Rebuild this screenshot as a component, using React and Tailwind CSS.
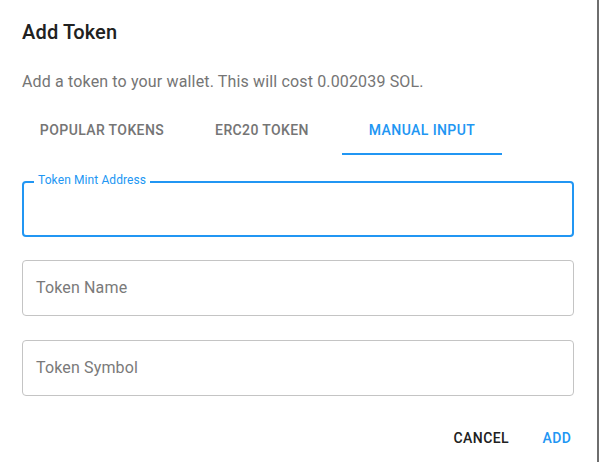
export default function App() {
  const tabs = ["Popular Tokens", "ERC20 Token", "Manual Input"];
  const medium = { fontFamily: "'Roboto Medium', Roboto, 'Liberation Sans', sans-serif" };
  return (
    <div className="flex w-[599px] h-[462px] bg-white" style={{ fontFamily: "Roboto, 'Liberation Sans', sans-serif" }}>
      <div className="w-[597px] h-[462px] bg-white flex flex-col">
        <div style={medium} className="pl-[22px] pt-4 pb-4 text-[20px] leading-[32px] font-medium tracking-[0.15px] text-[#212121]">
          Add Token
        </div>
        <div className="pl-[22px] pr-[23px] pt-[6px] flex flex-col">
          <p className="text-[16px] leading-[24px] text-[#757575] tracking-[0.15px] mb-[13px]">
            Add a token to your wallet. This will cost 0.002039 SOL.
          </p>
          <div className="flex h-[48px]">
            {tabs.map((t, i) => (
              <div
                key={t}
                style={medium}
                className={
                  "w-[160px] h-[48px] flex items-center justify-center uppercase text-[14px] font-medium tracking-[0.4px] " +
                  (i === 2 ? "text-[#2196f3] border-b-2 border-[#2196f3]" : "text-[#757575] border-b-2 border-transparent")
                }
              >
                <span className="pt-[1px]">{t}</span>
              </div>
            ))}
          </div>
          <div className="mt-[26px] relative h-[56px] rounded-[4px] border-2 border-[#2196f3]">
            <span className="absolute -top-[11px] left-[10px] px-[4px] bg-white text-[12px] leading-[16px] text-[#2196f3] tracking-[0.1px]">
              Token Mint Address
            </span>
          </div>
          <div className="mt-[23px] h-[56px] rounded-[4px] border border-[#c4c4c4] flex items-center pl-[13px] text-[16px] text-[#7a7a7a] tracking-[0.15px]">
            Token Name
          </div>
          <div className="mt-[24px] h-[56px] rounded-[4px] border border-[#c4c4c4] flex items-center pl-[13px] text-[16px] text-[#7a7a7a] tracking-[0.15px]">
            Token Symbol
          </div>
        </div>
        <div className="flex justify-end items-center pr-[8px] mt-[24px] gap-[8px]">
          <div style={medium} className="h-[36px] min-w-[64px] px-[8px] flex items-center justify-center uppercase text-[14px] font-medium tracking-[0.4px] text-[#212121]">
            Cancel
          </div>
          <div style={medium} className="h-[36px] min-w-[64px] px-[8px] flex items-center justify-center uppercase text-[14px] font-medium tracking-[0.4px] text-[#2196f3]">
            Add
          </div>
        </div>
      </div>
      <div className="w-[2px] h-[462px] bg-[#6e6e6e]" />
    </div>
  );
}
